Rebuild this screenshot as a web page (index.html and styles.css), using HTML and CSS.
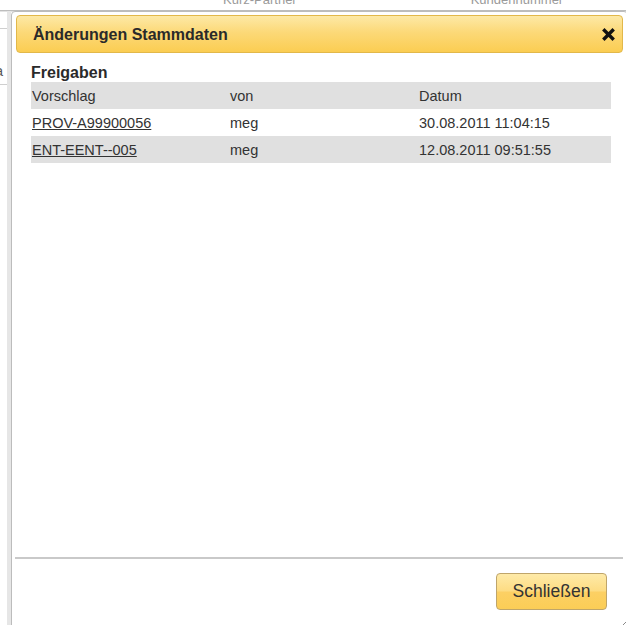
FILE: index.html
```html
<!DOCTYPE html>
<html lang="de">
<head>
<meta charset="utf-8">
<title>Änderungen Stammdaten</title>
<link rel="stylesheet" href="styles.css">
</head>
<body>
  <div class="backdrop">
    <div class="backdrop-top">
      <span class="col-a">Kurz-Partner</span>
      <span class="col-b">Kundennummer</span>
    </div>
    <div class="backdrop-main">
      <div class="side">
        <div class="side-cell side-cell-first"></div>
        <div class="side-cell side-cell-text"><span>Firma</span></div>
      </div>
    </div>
  </div>

  <div class="dialog" role="dialog" aria-labelledby="dlg-title">
    <div class="dialog-header">
      <h1 id="dlg-title" class="dialog-title">Änderungen Stammdaten</h1>
      <button class="dialog-close" type="button" aria-label="Schließen">
        <svg width="13" height="13" viewBox="0 0 13 13">
          <path d="M2.5 2.5 L10.5 10.5 M10.5 2.5 L2.5 10.5" stroke="#111" stroke-width="3.4" stroke-linecap="square" fill="none"/>
        </svg>
      </button>
    </div>

    <div class="dialog-body">
      <h2 class="section-title">Freigaben</h2>
      <table class="grid">
        <colgroup>
          <col class="c1"><col class="c2"><col class="c3">
        </colgroup>
        <thead>
          <tr><th>Vorschlag</th><th>von</th><th>Datum</th></tr>
        </thead>
        <tbody>
          <tr><td><a href="#">PROV-A99900056</a></td><td>meg</td><td>30.08.2011 11:04:15</td></tr>
          <tr class="alt"><td><a href="#">ENT-EENT--005</a></td><td>meg</td><td>12.08.2011 09:51:55</td></tr>
        </tbody>
      </table>
    </div>

    <div class="dialog-footer">
      <button class="btn" type="button">Schließen</button>
    </div>

    <svg class="grip" width="12" height="10" viewBox="0 0 12 10">
      <path d="M1 10 L11 0 M5 10 L12 3 M9 10 L12 7" stroke="#8a8a8a" stroke-width="1" fill="none"/>
    </svg>
  </div>
</body>
</html>
```

FILE: styles.css
```css
html, body {
  margin: 0;
  padding: 0;
  background: #fff;
  overflow: hidden;
}

body {
  width: 626px;
  height: 625px;
  position: relative;
  font-family: "Liberation Sans", Arial, sans-serif;
  color: #333;
}

/* page behind the dialog */
.backdrop {
  display: flex;
  flex-direction: column;
  height: 100%;
}

.backdrop-top {
  height: 10px;
  border-bottom: 1px solid #bdbdbd;
  box-shadow: 0 1px 0 #e2e2e2;
  overflow: hidden;
  display: flex;
  font-size: 13px;
  line-height: 13px;
  color: #9a9a9a;
}

.backdrop-top span {
  margin-top: -7px;
}

.col-a { margin-left: 223px; }
.col-b { margin-left: 174px; }

.backdrop-main {
  flex: 1;
  display: flex;
}

.side {
  width: 7px;
  border-right: 4px solid #e6e6e6;
  display: flex;
  flex-direction: column;
}

.side-cell {
  border-bottom: 1px solid #cfcfcf;
}

.side-cell-first { height: 17px; }

.side-cell-text {
  height: 56px;
  display: flex;
  justify-content: flex-end;
  align-items: flex-end;
  overflow: hidden;
  padding-right: 4px;
  padding-bottom: 6px;
  box-sizing: border-box;
  font-size: 14px;
  line-height: 14px;
  color: #555;
  white-space: nowrap;
}

/* dialog */
.dialog {
  position: absolute;
  left: 11px;
  top: 11px;
  width: 617px;
  box-sizing: border-box;
  background: #fff;
  border: 1px solid #bcbcbc;
  border-radius: 4px;
  padding: 3px 4px 0 4px;
}

.dialog-header {
  height: 38px;
  box-sizing: border-box;
  display: flex;
  align-items: center;
  justify-content: space-between;
  padding: 1px 7px 0 16px;
  border: 1px solid #e2b84a;
  border-radius: 4px;
  background: linear-gradient(to bottom, #fde9a6 0%, #fcd978 45%, #fbcd52 100%);
}

.dialog-title {
  margin: 0;
  font-size: 16px;
  font-weight: bold;
  color: #2a2a2a;
}

.dialog-close {
  border: 0;
  background: none;
  padding: 0;
  width: 13px;
  height: 13px;
  display: flex;
  cursor: pointer;
}

.dialog-body {
  height: 504px;
  box-sizing: border-box;
  padding: 10px 12px 0 15px;
}

.section-title {
  margin: 0;
  font-size: 16px;
  line-height: 19px;
  font-weight: bold;
  color: #2a2a2a;
}

.grid {
  width: 580px;
  border-collapse: collapse;
  table-layout: fixed;
  font-size: 14.5px;
  color: #333;
}

.grid .c1 { width: 198px; }
.grid .c2 { width: 189px; }
.grid .c3 { width: 193px; }

.grid th,
.grid td {
  height: 27px;
  padding: 0 0 0 1px;
  text-align: left;
  font-weight: normal;
  white-space: nowrap;
}

.grid thead tr,
.grid tr.alt {
  background: #e0e0e0;
}

.grid a {
  color: #333;
  text-decoration: underline;
}

.dialog-footer {
  margin-left: -1px;
  border-top: 2px solid #c9c9c9;
  display: flex;
  justify-content: flex-end;
  padding: 14px 16px 20px 0;
}

.btn {
  width: 111px;
  height: 37px;
  border: 1px solid #bfa56a;
  border-radius: 4px;
  background: linear-gradient(to bottom, #feeaa8 0%, #fddc83 48%, #fcd064 52%, #fbcd56 100%);
  font-family: "Liberation Sans", Arial, sans-serif;
  font-size: 17.5px;
  color: #333;
  padding: 0;
  cursor: pointer;
}

.grip {
  position: absolute;
  right: -1px;
  bottom: -1px;
}
```
